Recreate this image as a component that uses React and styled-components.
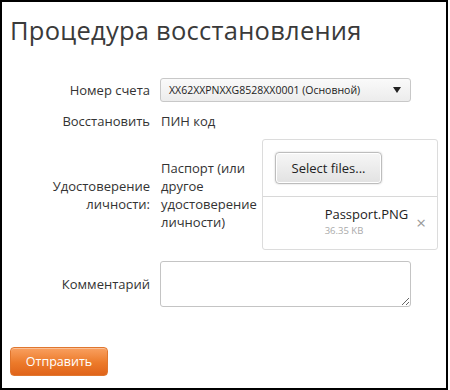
import React from 'react'
import styled, { createGlobalStyle } from 'styled-components'

const GlobalStyle = createGlobalStyle`
    html, body {
        margin: 0;
        padding: 0;
        background: #fff;
    }
    body {
        font-family: "Open Sans", "Liberation Sans", sans-serif;
        color: #333;
    }
`

const Frame = styled.div`
    box-sizing: border-box;
    width: 448px;
    height: 390px;
    border: 2px solid #000;
    padding: 10px 8px 0 8px;
    display: flex;
    flex-direction: column;
`

const Title = styled.h1`
    margin: 0;
    font-weight: 400;
    font-size: 25.5px;
    line-height: 36px;
    color: #3a3a3a;
    letter-spacing: 0.25px;
`

const Form = styled.div`
    display: flex;
    flex-direction: column;
    margin-top: 30px;
`

const Row = styled.div`
    display: grid;
    grid-template-columns: 140px 1fr;
    column-gap: 10px;
    align-items: ${p => p.align || 'center'};
    margin-bottom: ${p => p.gap || 0}px;
`

const Label = styled.div`
    text-align: right;
    font-size: 13px;
    line-height: 18px;
    color: #333;
`

const Value = styled.div`
    font-size: 13px;
    line-height: 18px;
    color: #333;
    padding-left: 1px;
`

const Select = styled.div`
    box-sizing: border-box;
    width: 251px;
    height: 24px;
    border: 1px solid #c8c8c8;
    border-radius: 3px;
    background: linear-gradient(#fafafa, #ececec);
    display: flex;
    align-items: center;
    justify-content: space-between;
    padding: 0 8px 0 8px;
    font-size: 10.5px;
    color: #222;
`

const Arrow = styled.span`
    width: 0;
    height: 0;
    border-left: 4px solid transparent;
    border-right: 4px solid transparent;
    border-top: 6px solid #222;
    margin-right: 1px;
`

const DocCell = styled.div`
    display: flex;
    align-items: flex-start;
`

const DocText = styled.div`
    width: 101px;
    font-size: 13px;
    line-height: 18px;
    color: #333;
    padding-left: 1px;
    margin-top: 20px;
`

const Upload = styled.div`
    box-sizing: border-box;
    width: 176px;
    height: 111px;
    border: 1px solid #dcdcdc;
    border-radius: 3px;
    display: flex;
    flex-direction: column;
`

const UploadTop = styled.div`
    height: 57px;
    box-sizing: border-box;
    padding: 12px 12px 0 12px;
    border-bottom: 1px solid #d8d8d8;
`

const SelectButton = styled.button`
    box-sizing: border-box;
    width: 107px;
    height: 32px;
    border: 1px solid #bdbdbd;
    border-radius: 4px;
    background: linear-gradient(#f6f6f6, #e2e2e2);
    box-shadow: inset 0 0 0 1px #fff, 0 0 2px rgba(0,0,0,0.2);
    font-family: inherit;
    font-size: 13px;
    color: #222;
    padding: 0;
`

const FileItem = styled.div`
    display: flex;
    justify-content: flex-end;
    align-items: center;
    padding: 9px 11px 0 10px;
    gap: 8px;
`

const FileInfo = styled.div`
    display: flex;
    flex-direction: column;
`

const FileName = styled.span`
    font-size: 13px;
    line-height: 17px;
    color: #222;
`

const FileSize = styled.span`
    font-size: 9.5px;
    line-height: 14px;
    margin-top: 1px;
    color: #aaa;
`

const Remove = styled.span`
    font-size: 17px;
    color: #999;
    line-height: 16px;
    margin-top: 2px;
`

const Comment = styled.textarea`
    box-sizing: border-box;
    width: 251px;
    height: 46px;
    border: 1px solid #c4c4c4;
    border-radius: 3px;
    resize: both;
    margin: 0;
    display: block;
    font-family: inherit;
`

const Submit = styled.button`
    box-sizing: border-box;
    align-self: flex-start;
    margin-top: 40px;
    width: 98px;
    height: 29px;
    border: 1px solid #e0762e;
    border-radius: 4px;
    background: linear-gradient(#f9a060, #ec7a2a 55%, #e0641a);
    box-shadow: inset 0 1px 0 rgba(255,255,255,0.35);
    color: #fff;
    font-family: inherit;
    font-size: 12.5px;
    padding: 0;
`

export default function App() {
    return (
        <>
            <GlobalStyle />
            <Frame>
                <Title>Процедура восстановления</Title>
                <Form>
                    <Row gap={10}>
                        <Label>Номер счета</Label>
                        <Select>
                            <span>XX62XXPNXXG8528XX0001 (Основной)</span>
                            <Arrow />
                        </Select>
                    </Row>
                    <Row gap={9}>
                        <Label>Восстановить</Label>
                        <Value>ПИН код</Value>
                    </Row>
                    <Row gap={11}>
                        <Label>Удостоверение<br />личности:</Label>
                        <DocCell>
                            <DocText>Паспорт (или другое удостоверение личности)</DocText>
                            <Upload>
                                <UploadTop>
                                    <SelectButton>Select files...</SelectButton>
                                </UploadTop>
                                <FileItem>
                                    <FileInfo>
                                        <FileName>Passport.PNG</FileName>
                                        <FileSize>36.35 KB</FileSize>
                                    </FileInfo>
                                    <Remove>×</Remove>
                                </FileItem>
                            </Upload>
                        </DocCell>
                    </Row>
                    <Row>
                        <Label>Комментарий</Label>
                        <Comment />
                    </Row>
                </Form>
                <Submit>Отправить</Submit>
            </Frame>
        </>
    )
}
